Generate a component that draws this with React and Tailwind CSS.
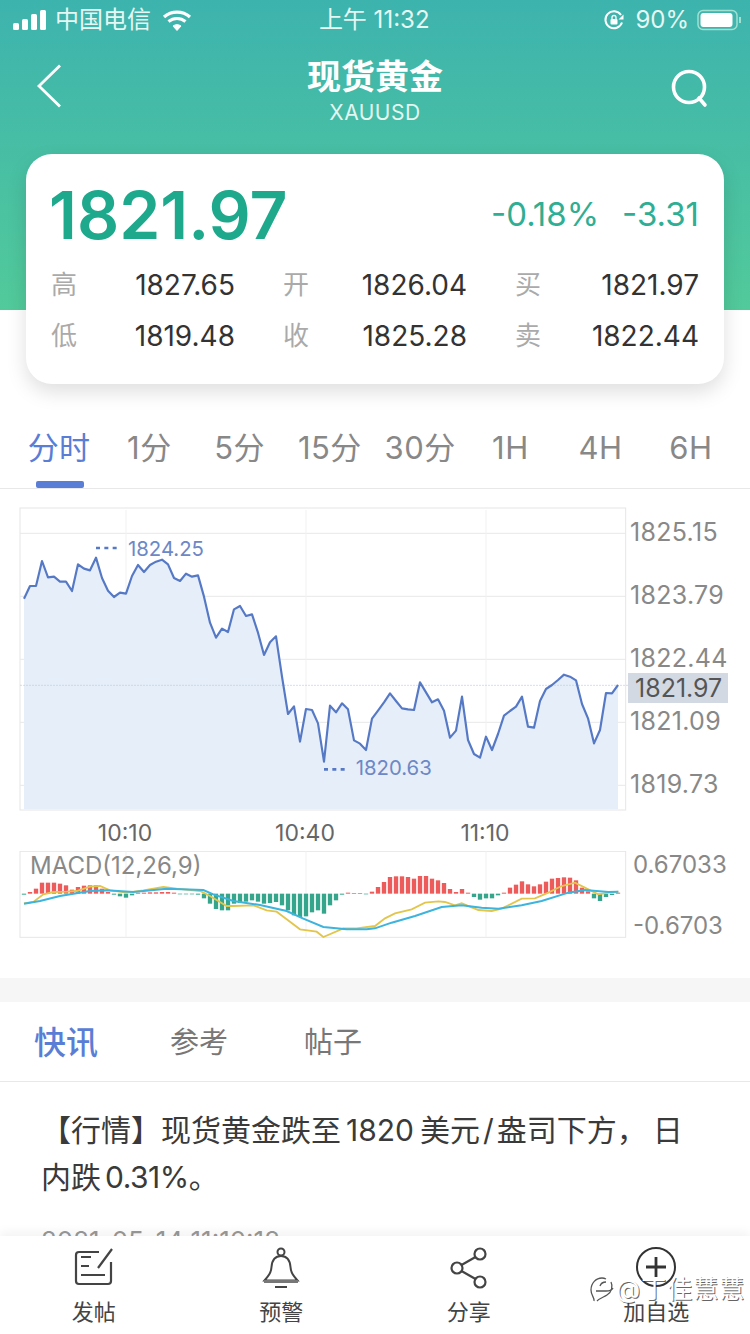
const pricePoints = [
  [72, 296], [90, 258], [108, 258], [126, 183], [144, 232], [162, 230], [180, 245], [198, 245], [216, 273], [234, 193],
  [252, 206], [270, 211], [288, 173], [306, 234], [324, 272], [342, 291], [360, 278], [378, 281], [396, 228], [414, 195],
  [432, 216], [450, 195], [468, 185], [486, 179], [504, 193], [522, 234], [540, 243], [558, 221], [576, 230], [594, 226],
  [612, 290], [630, 368], [648, 413], [666, 386], [684, 396], [702, 328], [720, 318], [738, 348], [756, 343], [774, 398],
  [792, 465], [810, 427], [828, 409], [846, 530], [864, 642], [882, 619], [900, 725], [918, 627], [936, 630], [954, 670],
  [972, 785], [990, 617], [1008, 637], [1026, 610], [1044, 628], [1062, 721], [1080, 731], [1098, 750], [1116, 656],
  [1134, 632], [1152, 607], [1170, 580], [1188, 603], [1206, 625], [1224, 628], [1242, 630], [1260, 547], [1278, 577],
  [1296, 607], [1314, 598], [1332, 632], [1350, 713], [1368, 692], [1386, 590], [1404, 720], [1422, 762], [1440, 773],
  [1458, 710], [1476, 750], [1494, 702], [1512, 647], [1530, 633], [1548, 620], [1566, 590], [1584, 680], [1602, 683],
  [1620, 603], [1638, 567], [1656, 555], [1674, 540], [1692, 524], [1710, 530], [1728, 541], [1746, 612], [1764, 655],
  [1782, 730], [1800, 690], [1818, 579], [1836, 580], [1854, 555],
];

const macdBars = [
  -3, 5, 15, 33, 33, 33, 30, 25, 12, 20, 24, 25, 25, 15, 5, -3, -8, -12, -5, 3, 3, 4, 4, 5, 5, 3, -2, -2, -2, -3, -14, -30,
  -46, -50, -50, -30, -28, -24, -20, -24, -30, -28, -25, -35, -50, -65, -70, -68, -56, -50, -60, -35, -20, -3, 3, 2, 2, -2, 6,
  20, 35, 50, 52, 52, 50, 45, 53, 53, 45, 40, 32, 14, 5, 14, 3, -10, -18, -14, -14, -5, 3, 18, 27, 37, 28, 22, 28, 36, 45, 47,
  49, 48, 40, 18, 7, -14, -22, -10, -4, 3,
];

const yellowLine = '72,187 100,183 130,160 160,153 200,152 230,150 270,137 300,135 330,148 380,155 430,148 490,138 530,143 600,150 630,165 680,195 700,195 760,193 800,208 830,212 860,235 900,265 950,272 970,288 1030,262 1070,262 1125,255 1155,232 1185,217 1235,205 1275,185 1315,181 1335,183 1365,193 1385,187 1435,207 1475,210 1505,203 1565,173 1605,172 1645,155 1685,135 1725,125 1765,145 1795,160 1825,155 1855,152';
const blueLine = '72,188 120,180 180,165 270,150 320,148 400,153 500,143 610,147 640,160 700,180 780,192 860,210 910,233 970,258 1040,265 1100,265 1125,262 1175,245 1245,225 1325,198 1385,193 1445,200 1495,203 1565,193 1625,180 1705,155 1755,147 1825,153 1855,152';

const quoteRows = [
  [['高', '1827.65'], ['开', '1826.04'], ['买', '1821.97']],
  [['低', '1819.48'], ['收', '1825.28'], ['卖', '1822.44']],
];
const periods = ['分时', '1分', '5分', '15分', '30分', '1H', '4H', '6H'];
const priceTicks = ['1825.15', '1823.79', '1822.44', '1821.09', '1819.73'];

function NoteIcon() {
  return (
    <svg width="42" height="42" viewBox="0 0 42 42" fill="none" stroke="#444" strokeWidth="2.2">
      <path d="M26 5H6a3 3 0 0 0-3 3v26a3 3 0 0 0 3 3h29a3 3 0 0 0 3-3V15" />
      <path d="M39 2 25 21M8 10h10M8 19h8M8 28h24" />
    </svg>
  );
}

function BellIcon() {
  return (
    <svg width="42" height="42" viewBox="0 0 42 42" fill="none" stroke="#444" strokeWidth="2">
      <circle cx="21" cy="5" r="3.5" />
      <path d="M21 9c-7 0-9 5-9.500 11-.5 6-3 9-7 13.500h33c-4-4.500-6.500-7.500-7-13.500C30 14 28 9 21 9Z" />
      <path d="M4 34.500h34" strokeWidth="3" stroke="#777" />
      <path d="M15 40h12" />
    </svg>
  );
}

function ShareIcon() {
  return (
    <svg width="42" height="42" viewBox="0 0 42 42" fill="none" stroke="#444" strokeWidth="2.2">
      <circle cx="32" cy="7" r="5.500" />
      <circle cx="9" cy="21" r="5.500" />
      <circle cx="32" cy="35" r="5.500" />
      <path d="M27.500 10 13.500 18M13.500 24l14 8" />
    </svg>
  );
}

function PlusIcon() {
  return (
    <svg width="42" height="42" viewBox="0 0 42 42" fill="none" stroke="#333" strokeWidth="2">
      <circle cx="21" cy="20" r="19" />
      <path d="M11 20h20M21 10v20" strokeWidth="2.800" />
    </svg>
  );
}

const toolbar = [
  { label: '发帖', icon: <NoteIcon /> },
  { label: '预警', icon: <BellIcon /> },
  { label: '分享', icon: <ShareIcon /> },
  { label: '加自选', icon: <PlusIcon /> },
];

function StatusBar() {
  return (
    <div className="flex h-[40px] items-center justify-between pl-[13px] pr-[7px] text-[24px] leading-none text-[#e6f7f3]">
      <div className="flex w-[220px] items-center">
        <svg width="34" height="22" viewBox="0 0 34 22" fill="white">
          <rect x="0" y="14" width="6" height="7" rx="1.500" />
          <rect x="9" y="10" width="6" height="11" rx="1.500" />
          <rect x="18" y="5" width="6" height="16" rx="1.500" />
          <rect x="27" y="1" width="6" height="20" rx="1.500" />
        </svg>
        <span className="ml-[8px]">中国电信</span>
        <svg className="ml-[11px]" width="30" height="22" viewBox="0 0 30 22" fill="none" stroke="white" strokeWidth="3.200">
          <path d="M2 8c7.500-6.500 18.500-6.500 26 0M6.500 12.500c5-4 12-4 17 0" />
          <path d="M11 17c2.500-1.800 5.500-1.800 8 0l-4 4.500Z" fill="white" strokeWidth="1" />
        </svg>
      </div>
      <span className="-ml-[88px]">上午 11:32</span>
      <div className="flex items-center">
        <svg width="22" height="22" viewBox="0 0 22 22" fill="none" stroke="white" strokeWidth="2">
          <path d="M19 13.500A8.500 8.500 0 1 1 18 6" />
          <path d="M20.500 5.500v5h-5Z" fill="white" stroke="none" />
          <rect x="7.500" y="10" width="7" height="5.500" rx="1" fill="white" stroke="none" />
          <path d="M9 10V8.500a2 2 0 0 1 4 0V10" strokeWidth="1.300" />
        </svg>
        <span className="ml-[10px]">90%</span>
        <svg className="ml-[8px]" width="46" height="22" viewBox="0 0 46 22" fill="none">
          <rect x="1" y="1.500" width="39" height="19" rx="5" stroke="#9fe0d3" strokeWidth="1.500" />
          <rect x="3.500" y="4" width="32" height="14" rx="3" fill="white" />
          <path d="M43 8v6" stroke="#9fe0d3" strokeWidth="2" />
        </svg>
      </div>
    </div>
  );
}

function PriceChart() {
  const line = pricePoints.map((p) => p.join(',')).join(' ');
  return (
    <svg width="628" height="314" viewBox="0 3 1884 942" className="block shrink-0">
      <rect x="60" y="24" width="1817" height="906" fill="none" stroke="#e6e6e6" strokeWidth="3" />
      {[100, 289, 478, 667, 856].map((y) => (
        <line key={y} x1="60" x2="1877" y1={y} y2={y} stroke="#e8e8e8" strokeWidth="3" />
      ))}
      {[378, 918, 1458].map((x) => (
        <line key={x} x1={x} x2={x} y1="30" y2="930" stroke="#f1f1f1" strokeWidth="3" />
      ))}
      <polygon points={`72,928 ${line} 1854,928`} fill="#e6eef9" />
      <line x1="60" x2="1884" y1="556" y2="556" stroke="#bccde6" strokeWidth="2" strokeDasharray="6 3" />
      <polyline points={line} fill="none" stroke="#5679c6" strokeWidth="6.500" strokeLinejoin="round" />
      <line x1="288" x2="350" y1="144" y2="144" stroke="#5679c6" strokeWidth="8" strokeDasharray="12 13" />
      <line x1="972" x2="1034" y1="808" y2="808" stroke="#5679c6" strokeWidth="8" strokeDasharray="12 13" />
      <text x="384" y="167" fontSize="61" fill="#6c88c6">1824.25</text>
      <text x="1067" y="824" fontSize="61" fill="#6c88c6">1820.63</text>
    </svg>
  );
}

function MacdChart() {
  return (
    <svg width="628" height="87" viewBox="0 30 1884 261" className="block shrink-0">
      <rect x="60" y="31" width="1817" height="258" fill="none" stroke="#e6e6e6" strokeWidth="3" />
      {[378, 918, 1458].map((x) => (
        <line key={x} x1={x} x2={x} y1="31" y2="289" stroke="#f1f1f1" strokeWidth="3" />
      ))}
      {macdBars.map((v, i) => (
        <rect
          key={i}
          x={72 + i * 18 - 6.5}
          y={v > 0 ? 158 - v : 158}
          width="13"
          height={Math.abs(v)}
          fill={v > 0 ? '#ee5b5b' : '#35a68c'}
        />
      ))}
      <polyline points={yellowLine} fill="none" stroke="#e2c64c" strokeWidth="5.500" />
      <polyline points={blueLine} fill="none" stroke="#3cb4dd" strokeWidth="6" />
      <text x="90" y="100" fontSize="72" fill="#888">MACD(12,26,9)</text>
    </svg>
  );
}

export default function App() {
  return (
    <div className="flex h-[1334px] w-[750px] flex-col overflow-hidden bg-white bg-[linear-gradient(180deg,#3db3ae_0%,#52ca9a_100%)] bg-[length:100%_310px] bg-no-repeat font-[Inter,'Noto_Sans_CJK_SC',sans-serif]">
      <StatusBar />

      <header className="relative flex h-[114px] flex-col items-center text-white">
        <svg className="absolute left-[36px] top-[24px]" width="26" height="44" viewBox="0 0 26 44" fill="none" stroke="white" strokeWidth="2.800">
          <path d="M24 1.500 3 22l21 20.500" />
        </svg>
        <h1 className="mt-[15px] text-[34px] font-bold leading-[44px]">现货黄金</h1>
        <span className="text-[21px] leading-[27px] tracking-[0.5px] text-[#e3f6f1]">XAUUSD</span>
        <svg className="absolute right-[40px] top-[28px]" width="40" height="40" viewBox="0 0 40 40" fill="none" stroke="white" strokeWidth="3.600">
          <circle cx="19" cy="19" r="15.500" />
          <path d="m29 30 6 7" strokeLinecap="round" />
        </svg>
      </header>

      <section className="mx-[26px] h-[230px] shrink-0 rounded-[26px] bg-white px-[25px] pt-[24px] shadow-[0_8px_20px_rgba(0,0,0,0.13)]">
        <div className="flex h-[72px] items-center justify-between">
          <span className="-ml-[2px] mt-[2px] text-[66px] font-semibold leading-none tracking-[0px] text-[#1ea98d]">1821.97</span>
          <div className="flex gap-[23px] text-[33px] leading-none text-[#2fae93]">
            <span>-0.18%</span>
            <span>-3.31</span>
          </div>
        </div>
        <div className="mt-[9px] flex flex-col">
          {quoteRows.map((row) => (
            <div key={row[0][0]} className="grid h-[51px] grid-cols-[184px_184px_184px] items-center gap-x-[48px]">
              {row.map(([label, value]) => (
                <div key={label} className="flex items-center justify-between">
                  <span className="text-[26px] text-[#aaaaaa]">{label}</span>
                  <span className="text-[28px] text-[#333333]">{value}</span>
                </div>
              ))}
            </div>
          ))}
        </div>
      </section>

      <nav className="grid h-[105px] shrink-0 grid-cols-8 border-b border-[#e8e8e8] px-[14px]">
        {periods.map((period, i) => (
          <div key={period} className="flex flex-col items-center">
            <span className={`mt-[46px] whitespace-nowrap text-[31px] leading-[36px] tracking-[0.5px] ${i === 0 ? 'text-[#5a7dd6]' : 'text-[#888888]'}`}>
              {period}
            </span>
            {i === 0 && <span className="ml-[2px] mt-[15px] h-[7px] w-[48px] rounded-[2px] bg-[#5a7dd6]" />}
          </div>
        ))}
      </nav>

      <section className="h-[489px] shrink-0 pt-[12px]">
        <div className="flex">
          <PriceChart />
          <div className="relative flex flex-col text-[25px] tracking-[0.3px] text-[#888888]">
            {priceTicks.map((tick) => (
              <span key={tick} className="ml-[2px] h-[63px] leading-[63px]">{tick}</span>
            ))}
            <span className="absolute left-0 top-[172px] h-[30px] w-[100px] bg-[#d3d9e3] pl-[7px] leading-[30px] tracking-normal text-[#555555]">1821.97</span>
          </div>
        </div>
        <div className="grid h-[35px] grid-cols-[180px_180px_180px] pl-[35px] text-[23px] leading-[35px] text-[#666666]">
          <span className="text-center">10:10</span>
          <span className="text-center">10:40</span>
          <span className="text-center">11:10</span>
        </div>
        <div className="flex">
          <MacdChart />
          <div className="-mt-[1px] flex h-[91px] flex-col justify-between pl-[5px] text-[24px] leading-[30px] text-[#888888]">
            <span>0.67033</span>
            <span>-0.6703</span>
          </div>
        </div>
      </section>

      <div className="h-[24px] shrink-0 bg-[#f6f6f6]" />

      <nav className="flex h-[80px] shrink-0 items-center border-b border-[#e8e8e8] pl-[34px] pt-[2px] text-[29px]">
        <span className="w-[136px] text-[32px] font-medium text-[#5a7dd6]">快讯</span>
        <span className="w-[134px] text-[#777777]">参考</span>
        <span className="text-[#777777]">帖子</span>
      </nav>

      <article className="min-h-0 flex-1 overflow-hidden px-[41px] pt-[25px]">
        <p className="whitespace-nowrap text-[30px] leading-[47px] text-[#3a3a3a]">
          【行情】现货黄金跌至<span className="ml-[5px] mr-[6px]">1820</span>美元<span className="mx-[3px]">/</span>盎司下方<span className="mr-[6px]">，</span>日
          <br />
          内跌<span className="ml-[4px] tracking-[-0.5px]">0.31%</span>。
        </p>
        <p className="mt-[25px] text-[26px] leading-[30px] text-[#999999]">2021-05-14 11:10:12</p>
      </article>

      <footer className="relative z-10 grid h-[98px] shrink-0 grid-cols-4 bg-white shadow-[0_-4px_10px_rgba(0,0,0,0.05)]">
        {toolbar.map((item) => (
          <div key={item.label} className="flex flex-col items-center pt-[11px]">
            {item.icon}
            <span className="mt-[8px] text-[22px] leading-[30px] text-[#444444]">{item.label}</span>
          </div>
        ))}
        <div className="absolute left-[589px] top-[38px] flex items-center whitespace-nowrap text-[25px] leading-[30px] tracking-[1px] text-white [text-shadow:1px_1px_0_rgba(50,50,50,0.75)]">
          <svg width="26" height="30" viewBox="0 0 26 30" fill="none" stroke="#555" strokeWidth="1.300">
            <path d="M5 27c1-3-3-5-3-11C2 9 7 4 13 4c2 0 3 .5 4 1M11 12c1-3 3-4 6-4M7 17h10c3 0 6-1 7-3" />
            <path d="M22 8c2 4 1 10-4 13-3 2-7 3-10 6" />
          </svg>
          <span className="ml-[1px]">@丁佳慧慧</span>
        </div>
      </footer>
    </div>
  );
}
